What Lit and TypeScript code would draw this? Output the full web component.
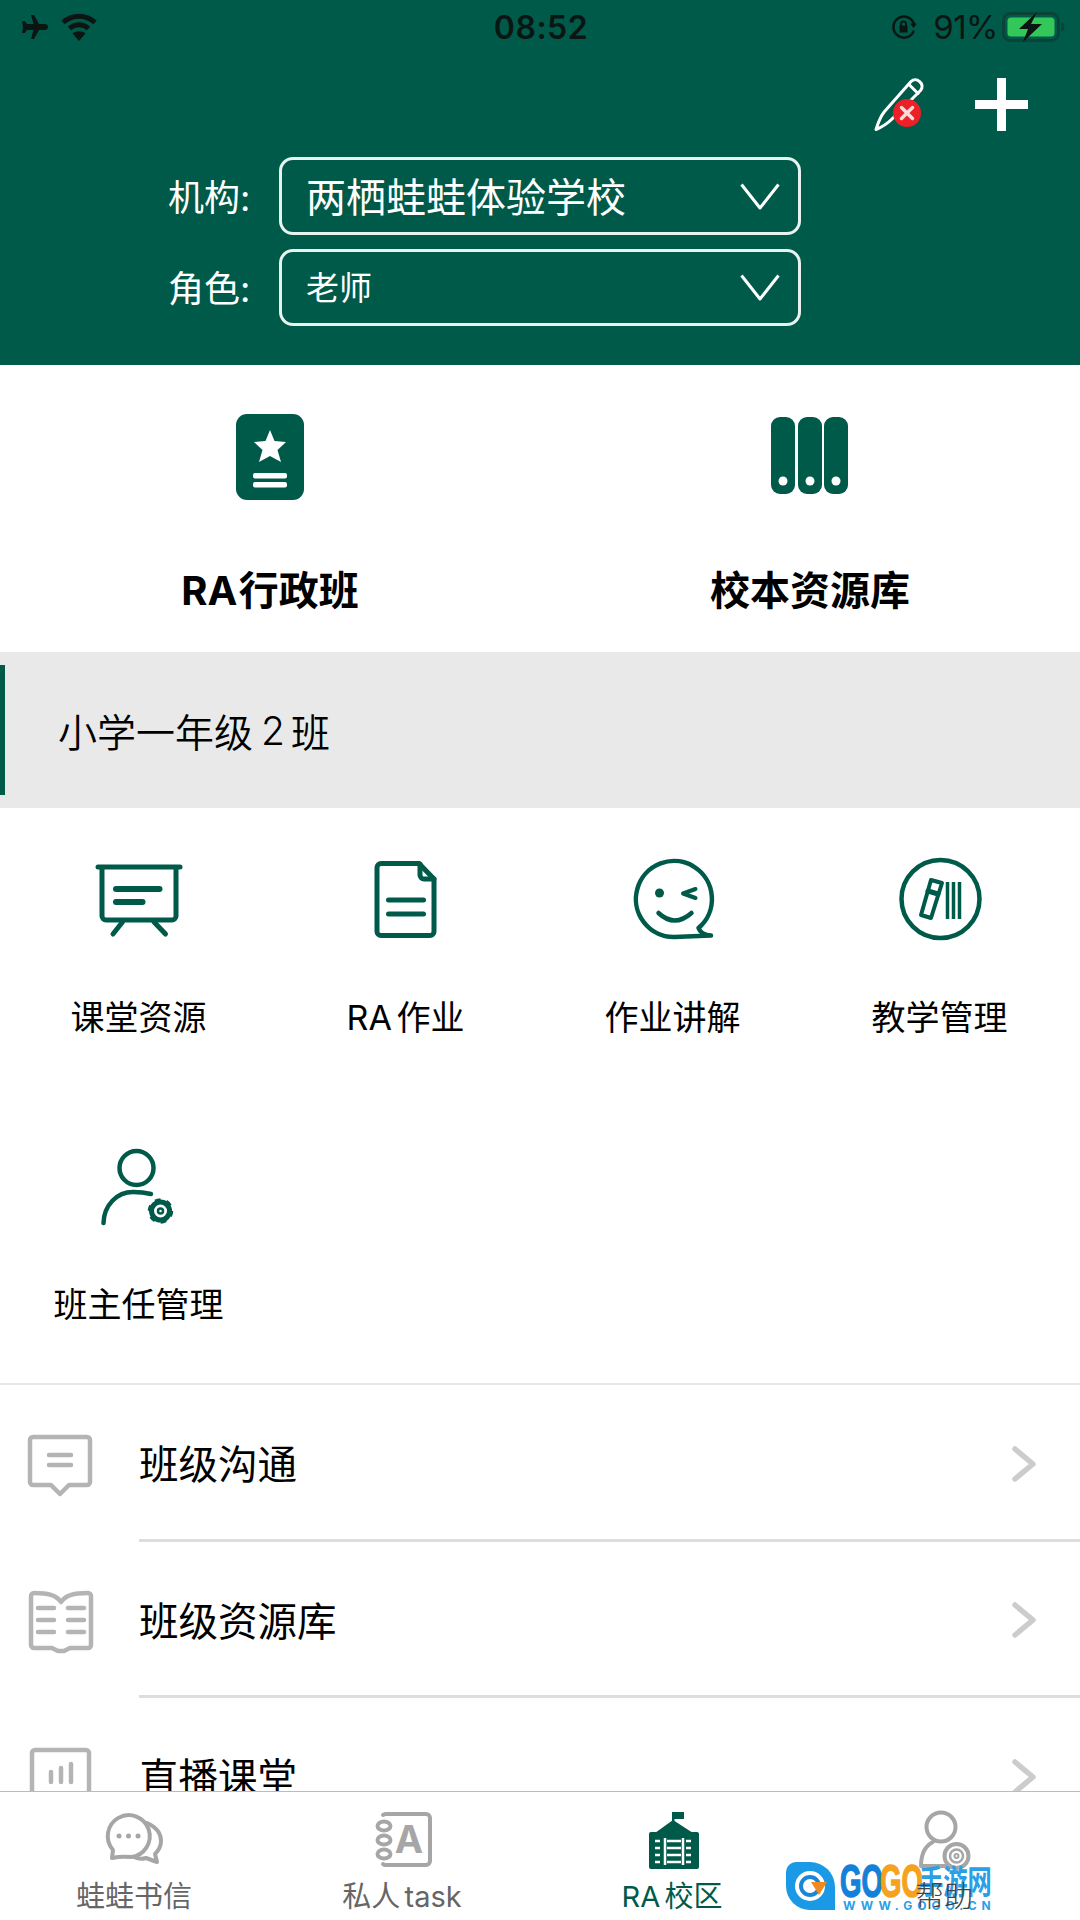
import { html, css, svg, LitElement } from "lit";
import { customElement } from "lit/decorators.js";

const GREEN = "#005a4a";
const TAB = "#a6a6a6";

const line = (x1: number, y1: number, x2: number, y2: number) =>
    svg`<line x1="${x1}" y1="${y1}" x2="${x2}" y2="${y2}"></line>`;

const gridIcons = [
    svg`<path d="M9 7H91"></path><path d="M13 8V56a4 4 0 0 0 4 4H83a4 4 0 0 0 4-4V8"></path>
        <g stroke-width="6">${line(27, 29, 70.5, 29)}${line(27, 42, 53.5, 42)}</g>${line(33.5, 62, 24, 74)}${line(65, 62, 76.5, 74)}`,
    svg`<path d="M25 3.500H63L78 19V71.500a4 4 0 0 1-4 4H25a4 4 0 0 1-4-4V7.500a4 4 0 0 1 4-4Z"></path>
        <path d="M64 4V15a4 4 0 0 0 4 4H78"></path>${line(32.5, 40, 67.5, 40)}${line(32.5, 54, 67.5, 54)}`,
    svg`<path d="M75.500 68A38 38 0 1 0 51.500 77L88 75.500Q78 75 75.500 68Z" stroke-width="4.500"></path>
        <circle cx="36.500" cy="33" r="4.500" fill="${GREEN}" stroke="none"></circle>
        <path d="M72.500 29L60 33.500L72.500 38" stroke-width="4"></path>
        <path d="M35.500 53Q51.500 68 68.500 53" stroke-width="4.500"></path>`,
    svg`<circle cx="50.500" cy="39" r="39" stroke-width="4.500"></circle>
        <path d="M41 20L52 23L41 58L31 55Z" stroke-width="4"></path>${line(38, 31, 48, 34)}
        <g stroke-width="3.500" stroke-linecap="butt">${line(57.5, 22, 57.5, 59)}${line(63.5, 22, 63.5, 59)}${line(69.5, 22, 69.5, 59)}</g>`,
    svg`<circle cx="47.500" cy="21" r="17" stroke-width="4.500"></circle>
        <path d="M14.500 76C15 58 28 45 44 45C52 45 58 46 62 47" stroke-width="4.500"></path>
        <circle cx="71.500" cy="64" r="9" stroke-width="5"></circle>
        <circle cx="71.500" cy="64" r="11" stroke-width="3.500" stroke-dasharray="5.500 6" stroke-linecap="butt"></circle>
        <circle cx="71.500" cy="64" r="2.500" stroke-width="2.500"></circle>`,
];

const gridItems = ["课堂资源", "RA 作业", "作业讲解", "教学管理", "班主任管理"];

const listItems = [
    {
        label: "班级沟通",
        icon: svg`<path d="M33 5H87a3 3 0 0 1 3 3V50a3 3 0 0 1-3 3H69L60 62L51 53H33a3 3 0 0 1-3-3V8a3 3 0 0 1 3-3Z"></path>
            ${line(49, 23, 71, 23)}${line(49, 33, 71, 33)}`,
    },
    {
        label: "班级资源库",
        icon: svg`<path d="M60 14C55 7 47 5 33 5a3 3 0 0 0-3 3V57a3 3 0 0 0 3 3H51L57 63H63L69 60H87a3 3 0 0 0 3-3V8a3 3 0 0 0-3-3C73 5 65 7 60 14Z" transform="translate(1 0)"></path>
            ${line(38, 20, 54, 20)}${line(38, 32, 54, 32)}${line(38, 44, 54, 44)}${line(68, 20, 84, 20)}${line(68, 32, 84, 32)}${line(68, 44, 84, 44)}`,
    },
    {
        label: "直播课堂",
        icon: svg`<rect x="32" y="5" width="57" height="44" rx="3"></rect>
            ${line(51, 27, 51, 37)}${line(61, 23, 61, 37)}${line(71, 19, 71, 37)}
            <path d="M52 50L60 58L68 50"></path>`,
    },
];

const tabs = [
    {
        label: "蛙蛙书信",
        icon: svg`<path d="M18 47L19 39A21 21 0 1 1 37 46Q27 45 18 47Z"></path>
            <path d="M53 12C62 16 67 22 67 30C67 36 64 40 61 43L63 51L52 47Q46 49 40 46"></path>
            <g fill="${TAB}" stroke="none"><circle cx="25" cy="25" r="2.500"></circle><circle cx="34.500" cy="25" r="2.500"></circle><circle cx="44" cy="25" r="2.500"></circle></g>`,
    },
    {
        label: "私人 task",
        icon: svg`<path d="M24 3H64a4 4 0 0 1 4 4V50a4 4 0 0 1-4 4H24a4 4 0 0 1-3-1M21 4a4 4 0 0 1 3-1"></path>
            <g fill="#fff"><ellipse cx="22" cy="15" rx="6.500" ry="4.500"></ellipse><ellipse cx="22" cy="29" rx="6.500" ry="4.500"></ellipse><ellipse cx="22" cy="43" rx="6.500" ry="4.500"></ellipse></g>
            <text x="47" y="42" text-anchor="middle" font-size="38" font-weight="700" fill="${TAB}" stroke="none" font-family="Inter, sans-serif">A</text>`,
    },
    {
        label: "RA 校区",
        active: true,
        icon: svg`<g fill="${GREEN}" stroke="none"><rect x="17" y="21" width="50" height="37" rx="2"></rect><path d="M23 22L41 9L61 22Z"></path>
            <rect x="40" y="1" width="2.500" height="12"></rect><path d="M41 1H52V8H41Z"></path></g>
            <g stroke="#fff" stroke-width="2.500" stroke-linecap="butt">
            ${line(35, 30, 49, 30)}${line(35, 37, 49, 37)}${line(35, 44, 49, 44)}${line(35, 51, 49, 51)}
            <g stroke-dasharray="5 2.500">${line(23, 30, 30, 30)}${line(23, 37, 30, 37)}${line(23, 44, 30, 44)}${line(23, 51, 30, 51)}
            ${line(54, 30, 61, 30)}${line(54, 37, 61, 37)}${line(54, 44, 61, 44)}${line(54, 51, 61, 51)}</g>
            ${line(33, 27, 33, 54)}${line(51, 27, 51, 54)}</g>`,
    },
    {
        label: "帮助",
        dark: true,
        icon: svg`<circle cx="37" cy="16" r="14.500"></circle>
            <path d="M29 31C21 35 17 44 17 55H42"></path>
            <circle cx="52.500" cy="45" r="12" fill="#fff"></circle>
            <circle cx="52.500" cy="45" r="6.500" stroke-width="2.500"></circle>
            <circle cx="52.500" cy="45" r="2" stroke-width="2"></circle>`,
    },
];

@customElement("app-root")
export class AppRoot extends LitElement {
    static styles = css`
        :host {
            display: flex;
            flex-direction: column;
            position: relative;

            width: 1080px;
            height: 1920px;
            overflow: hidden;

            background: #fff;
            color: #000;
            font-family: Inter, "Noto Sans CJK SC", sans-serif;
        }

        svg {
            display: block;
            flex: none;
            fill: none;
            overflow: visible;
            stroke-linecap: round;
            stroke-linejoin: round;
        }

        .header {
            height: 365px;
            flex: none;
            background: #005a4a;
            color: #fff;
        }

        .status {
            display: grid;
            grid-template-columns: 1fr auto 1fr;
            align-items: center;
            height: 54px;
            padding: 0 14px 0 20px;
            color: #0b1512;
        }

        .status-left {
            display: flex;
            align-items: center;
            gap: 12px;
        }

        .status-right {
            display: flex;
            align-items: center;
            justify-content: flex-end;
        }

        .lock {
            margin-right: 15px;
        }

        .time {
            margin-right: 4px;
            font-size: 32px;
            font-weight: 600;
            letter-spacing: 0.5px;
        }

        .battery-text {
            margin-right: 4px;
            font-size: 33px;
            letter-spacing: -0.5px;
        }

        .actions {
            display: flex;
            justify-content: flex-end;
            align-items: center;
            gap: 48px;
            padding: 24px 52px 0 0;
        }

        .form {
            display: flex;
            flex-direction: column;
            gap: 14px;
            margin-top: 26px;
            padding-left: 168px;
        }

        .form-row {
            display: flex;
            align-items: center;
        }

        .form-label {
            width: 111px;
            padding-bottom: 3px;
            font-size: 36px;
        }

        .select {
            display: flex;
            align-items: center;
            justify-content: space-between;
            box-sizing: border-box;
            width: 522px;
            padding: 0 18px 0 24px;

            border: solid 3px #e8f2ef;
            border-radius: 14px;
        }

        .select span {
            padding-bottom: 3px;
        }

        .select.org {
            height: 78px;
            font-size: 40px;
        }

        .select.role {
            height: 77px;
            font-size: 33px;
        }

        .main {
            flex: 1;
            min-height: 0;
            overflow: hidden;
        }

        .featured {
            display: grid;
            grid-template-columns: 540px 540px;
            height: 287px;
        }

        .feature {
            display: flex;
            flex-direction: column;
            align-items: center;
            padding-top: 46px;
        }

        .feature span {
            margin-top: 64px;
            font-size: 40px;
            line-height: 54px;
            font-weight: 700;
            word-spacing: -8px;
        }

        .class-band {
            display: flex;
            align-items: center;
            height: 156px;
            box-sizing: border-box;
            background: #e9e9e9;
            padding: 13px 0;
        }

        .class-name {
            display: flex;
            align-items: center;
            height: 100%;
            padding-left: 53px;
            border-left: solid 5px #005a4a;
            font-size: 39px;
            font-weight: 350;
        }

        .class-name i {
            font-style: normal;
            margin: 0 6px 0 8px;
        }

        .grid {
            display: grid;
            grid-template-columns: repeat(4, 267px);
            grid-auto-rows: 287px;
            padding-left: 5px;
        }

        .cell {
            display: flex;
            flex-direction: column;
            align-items: center;
            padding-top: 52px;
            box-sizing: border-box;
        }

        .cell svg {
            stroke: #005a4a;
            stroke-width: 5;
        }

        .cell span {
            margin-top: 54px;
            font-size: 34px;
            line-height: 48px;
            white-space: nowrap;
            word-spacing: -5px;
        }

        .list {
            margin-top: 1px;
            border-top: solid 2px #e6e6e6;
        }

        .row {
            display: flex;
            align-items: center;
            height: 156.500px;
        }

        .row svg.icon {
            stroke: #b4b4b4;
            stroke-width: 4.500;
            margin: 3px 19px 0 0;
        }

        .rule {
            display: flex;
            flex: 1;
            align-items: center;
            height: 100%;
            box-sizing: border-box;
            border-bottom: solid 3px #dddddd;
            padding-right: 43px;
        }

        .rule span {
            flex: 1;
            font-size: 39.500px;
        }

        .row svg.chevron {
            stroke: #cccccc;
            stroke-width: 5.500;
            margin-top: 4px;
        }

        .tabs {
            display: grid;
            grid-template-columns: 268px 268px 272px 272px;
            flex: none;
            height: 128px;
            background: #fff;
            border-top: solid 1px #bbbbbb;
        }

        .tab {
            display: flex;
            flex-direction: column;
            align-items: center;
            padding-top: 19px;
            color: #666666;
        }

        .tab svg {
            stroke: #a6a6a6;
            stroke-width: 4;
        }

        .tab span {
            margin-top: 8px;
            font-size: 29px;
            line-height: 40px;
            white-space: nowrap;
            word-spacing: -4px;
        }

        .tab.active {
            color: #005a4a;
        }

        .tab.dark span {
            position: relative;
            z-index: 2;
            color: #444444;
            font-weight: 300;
        }

        .watermark {
            display: flex;
            position: absolute;
            left: 786px;
            top: 1862px;
            z-index: 1;
            gap: 5px;
        }

        .wm-title {
            display: flex;
            height: 38px;
            line-height: 38px;
            font-weight: 700;
            white-space: nowrap;
            font-family: "Liberation Sans", sans-serif;
        }

        .wm-go {
            display: inline-block;
            width: 39.500px;
            font-size: 46px;
            -webkit-text-stroke: 1.5px currentColor;
            transform: scaleX(0.6);
            transform-origin: left;
        }

        .wm-blue {
            color: #1480d8;
        }

        .wm-orange {
            color: #f5a21e;
        }

        .wm-cn {
            display: inline-block;
            width: 73px;
            color: #2a9fe6;
            font-size: 24.300px;
            font-family: "Noto Sans CJK SC", sans-serif;
            transform: scaleY(1.35);
        }

        .wm-url {
            padding-left: 3px;
            color: #2a9fe6;
            font-size: 12px;
            line-height: 12px;
            font-weight: 700;
            letter-spacing: 5px;
            white-space: nowrap;
        }
    `;

    renderStatus() {
        return html`
            <div class="status">
                <div class="status-left">
                    <svg width="28" height="24" viewBox="0 0 28 24">
                        <path fill="#0b1512" d="M11 0h3l5 9h6c2 0 3 1.500 3 3s-1 3-3 3h-6l-5 9h-3l2.500-9H7l-2 3H2l1-6-1-6h3l2 3h6.500Z"></path>
                    </svg>
                    <svg width="38" height="28" viewBox="0 0 38 28" stroke="#0b1512" stroke-width="5" style="stroke-linecap:butt">
                        <path d="M3 9.500C12 1 26 1 35 9.500"></path>
                        <path d="M9.500 15.500C15 10.500 23 10.500 28.500 15.500"></path>
                        <path fill="#0b1512" stroke="none" d="M19 28L12.500 20.500C16 17.500 22 17.500 25.500 20.500Z"></path>
                    </svg>
                </div>
                <div class="time">08:52</div>
                <div class="status-right">
                    <svg class="lock" width="27" height="24" viewBox="0 0 27 24" stroke="#0b1512" stroke-width="2.500">
                        <path d="M22.500 16.500A10.500 10.500 0 1 1 23 9"></path>
                        <path fill="#0b1512" stroke="none" d="M19 8.500h7l-3.500 4.500ZM8.500 10.500h8v7h-8Z"></path>
                        <path stroke-width="1.800" d="M10 10.500V9a2.500 2.500 0 0 1 5 0v1.500"></path>
                    </svg>
                    <div class="battery-text">91%</div>
                    <svg width="64" height="30" viewBox="0 0 64 30">
                        <rect x="1.500" y="1.500" width="55" height="27" rx="7" stroke="#0a4438" stroke-width="3"></rect>
                        <rect x="5.500" y="5.500" width="47" height="19" rx="3.500" fill="#33c75a"></rect>
                        <path d="M59 10q3.500 1 3.500 5t-3.500 5Z" fill="#0a4438"></path>
                        <path d="M35 0L17 17H26L21 30L40 12H29Z" fill="#0b1512"></path>
                    </svg>
                </div>
            </div>
        `;
    }

    renderActions() {
        return html`
            <div class="actions">
                <svg width="53" height="53" viewBox="0 0 53 53" stroke="#fff" stroke-width="3">
                    <path d="M37 3.500C39.500 1 43 1 45.500 3.500C48.500 6 49 9.500 46.500 12.500L18 41C13 46 8 49 2 51.500C4 45 6 39 10.500 33.500Z"></path>
                    <path d="M35 6.500L44 15.500"></path>
                    <circle cx="33" cy="35" r="14" fill="#ec2026" stroke="none"></circle>
                    <path d="M27.500 29.500L38.500 40.500M38.500 29.500L27.500 40.500" stroke="#f7dcd9" stroke-width="3.500"></path>
                </svg>
                <svg width="53" height="53" viewBox="0 0 53 53">
                    <path d="M22 0h9v22h22v9H31v22h-9V31H0v-9h22Z" fill="#fff"></path>
                </svg>
            </div>
        `;
    }

    renderSelect(label: string, value: string, kind: string) {
        return html`
            <div class="form-row">
                <div class="form-label">${label}</div>
                <div class="select ${kind}">
                    <span>${value}</span>
                    <svg width="40" height="27" viewBox="0 0 40 27" stroke="#fff" stroke-width="3" style="stroke-linecap:butt">
                        <path d="M1.500 1.500L20 25L38.500 1.500"></path>
                    </svg>
                </div>
            </div>
        `;
    }

    renderFeatured() {
        return html`
            <div class="featured">
                <div class="feature">
                    <svg width="68" height="89" viewBox="0 0 68 89">
                        <rect y="3" width="68" height="86" rx="11" fill="${GREEN}"></rect>
                        <path fill="#fff" d="M34 19L38.500 30L50 31L41.500 39L45 51L34 45L23 51L26.500 39L18 31L29.500 30Z"></path>
                        <rect x="17" y="62" width="34" height="5.500" rx="2" fill="#fff"></rect>
                        <rect x="17" y="71" width="34" height="5.500" rx="2" fill="#fff"></rect>
                    </svg>
                    <span>RA 行政班</span>
                </div>
                <div class="feature">
                    <svg width="78" height="89" viewBox="0 0 78 89">
                        <g fill="${GREEN}">
                            <rect y="6" width="24" height="77" rx="9"></rect>
                            <rect x="27" y="6" width="24" height="77" rx="9"></rect>
                            <rect x="53" y="6" width="24" height="77" rx="9"></rect>
                        </g>
                        <g fill="#fff">
                            <circle cx="12" cy="70" r="4.500"></circle>
                            <circle cx="39" cy="70" r="4.500"></circle>
                            <circle cx="65" cy="70" r="4.500"></circle>
                        </g>
                    </svg>
                    <span>校本资源库</span>
                </div>
            </div>
        `;
    }

    renderList() {
        return html`
            <div class="list">
                ${listItems.map(
                    (item) => html`
                        <div class="row">
                            <svg class="icon" width="120" height="66" viewBox="0 0 120 66">${item.icon}</svg>
                            <div class="rule">
                                <span>${item.label}</span>
                                <svg class="chevron" width="26" height="38" viewBox="0 0 26 38">
                                    <path d="M4 4L22 19L4 34"></path>
                                </svg>
                            </div>
                        </div>
                    `
                )}
            </div>
        `;
    }

    renderWatermark() {
        return html`
            <div class="watermark">
                <svg width="49" height="48" viewBox="0 0 49 48">
                    <path d="M0 10A10 10 0 0 1 10 0H24A25 25 0 0 1 49 25V48H24A24 24 0 0 1 0 24Z" fill="#1a9ae6"></path>
                    <circle cx="24" cy="24" r="15" fill="#fff"></circle>
                    <circle cx="24" cy="24" r="9" stroke="#1a86d8" stroke-width="4"></circle>
                    <path d="M25 20H41L33 33Z" fill="#f08a1c"></path>
                </svg>
                <div>
                    <div class="wm-title">
                        <span class="wm-go wm-blue">GO</span><span class="wm-go wm-orange">GO</span><span class="wm-cn">手游网</span>
                    </div>
                    <div class="wm-url">WWW.GOGO.CN</div>
                </div>
            </div>
        `;
    }

    render() {
        return html`
            <div class="header">
                ${this.renderStatus()} ${this.renderActions()}
                <div class="form">
                    ${this.renderSelect("机构:", "两栖蛙蛙体验学校", "org")} ${this.renderSelect("角色:", "老师", "role")}
                </div>
            </div>
            <div class="main">
                ${this.renderFeatured()}
                <div class="class-band">
                    <div class="class-name">小学一年级<i>2</i>班</div>
                </div>
                <div class="grid">
                    ${gridItems.map(
                        (label, i) => html`
                            <div class="cell">
                                <svg width="100" height="80" viewBox="0 0 100 80">${gridIcons[i]}</svg>
                                <span>${label}</span>
                            </div>
                        `
                    )}
                </div>
                ${this.renderList()}
            </div>
            <div class="tabs">
                ${tabs.map(
                    (tab) => html`
                        <div class="tab ${tab.active ? "active" : ""} ${tab.dark ? "dark" : ""}">
                            <svg width="80" height="58" viewBox="0 0 80 58">${tab.icon}</svg>
                            <span>${tab.label}</span>
                        </div>
                    `
                )}
            </div>
            ${this.renderWatermark()}
        `;
    }
}
